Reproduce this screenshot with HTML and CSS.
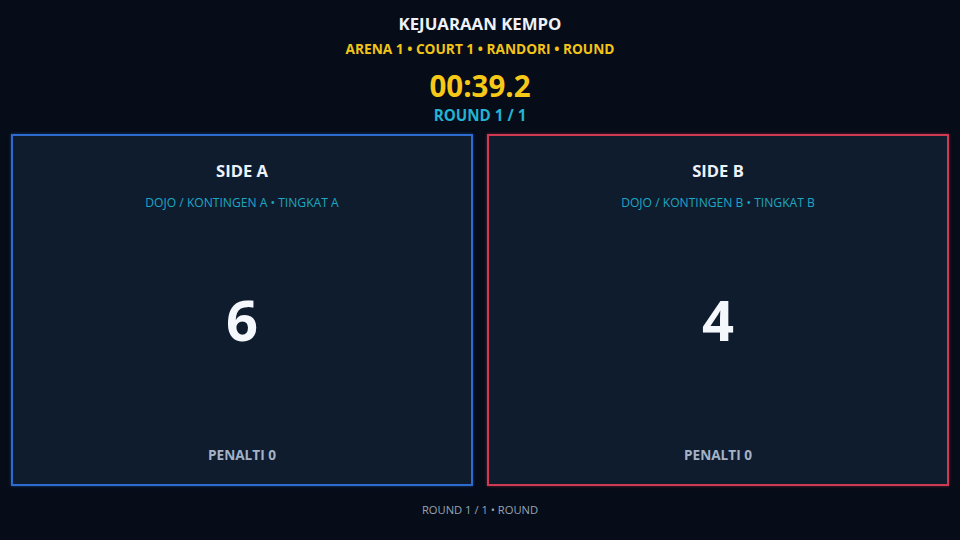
FILE: index.html
```html
<!DOCTYPE html>
<html lang="id">
<head>
<meta charset="utf-8">
<title>Kejuaraan Kempo</title>
<link rel="stylesheet" href="styles.css">
</head>
<body>
<header class="top">
  <div class="event">KEJUARAAN KEMPO</div>
  <div class="meta">ARENA 1 • COURT 1 • RANDORI • ROUND</div>
  <div class="timer">00:39.2</div>
  <div class="round">ROUND 1 / 1</div>
</header>
<main class="board">
  <section class="side side-a">
    <div class="side-name">SIDE A</div>
    <div class="side-info">DOJO / KONTINGEN A • TINGKAT A</div>
    <div class="score">6</div>
    <div class="penalty">PENALTI 0</div>
  </section>
  <section class="side side-b">
    <div class="side-name">SIDE B</div>
    <div class="side-info">DOJO / KONTINGEN B • TINGKAT B</div>
    <div class="score">4</div>
    <div class="penalty">PENALTI 0</div>
  </section>
</main>
<footer class="foot">ROUND 1 / 1 • ROUND</footer>
</body>
</html>
```
FILE: styles.css
```css
* { box-sizing: border-box; }
html, body { margin: 0; padding: 0; }
body {
  width: 960px;
  height: 540px;
  overflow: hidden;
  background: #060c18;
  font-family: "Open Sans", "Noto Sans", sans-serif;
  display: flex;
  flex-direction: column;
  text-align: center;
}
.top {
  padding-top: 14px;
  display: flex;
  flex-direction: column;
  align-items: center;
}
.event {
  font-size: 16.8px;
  line-height: 20px;
  font-weight: 700;
  color: #eef2f8;
}
.meta {
  margin-top: 6px;
  font-size: 13.7px;
  line-height: 18px;
  font-weight: 700;
  color: #f2c418;
}
.timer {
  margin-top: 11px;
  font-size: 29.5px;
  line-height: 34px;
  font-weight: 700;
  color: #f6c817;
}
.round {
  margin-top: 3px;
  font-size: 15.2px;
  line-height: 18px;
  font-weight: 700;
  color: #22b4d2;
}
.board {
  margin-top: 10px;
  padding: 0 11px;
  display: flex;
  gap: 14px;
  height: 352px;
}
.side {
  flex: 1;
  background: #0f1c2e;
  border: 2px solid #2e6bd0;
  display: flex;
  flex-direction: column;
  align-items: center;
  padding: 25px 0 20px;
}
.side-a { box-shadow: 0 0 3px rgba(46, 107, 208, 0.5); }
.side-b { border-color: #cf3a52; box-shadow: 0 0 3px rgba(207, 58, 82, 0.5); }
.side-name {
  font-size: 16.6px;
  line-height: 20px;
  font-weight: 700;
  color: #eef2f8;
}
.side-info {
  margin-top: 14px;
  font-size: 12.1px;
  line-height: 16px;
  color: #1ea7c4;
}
.score {
  flex: 1;
  display: flex;
  align-items: center;
  justify-content: center;
  padding-bottom: 20px;
  font-size: 56px;
  font-weight: 700;
  color: #f4f7fb;
}
.penalty {
  font-size: 13.6px;
  line-height: 18px;
  font-weight: 700;
  color: #a4b2c6;
}
.foot {
  margin-top: 17px;
  font-size: 11.2px;
  line-height: 14px;
  color: #98a4b4;
}
```
